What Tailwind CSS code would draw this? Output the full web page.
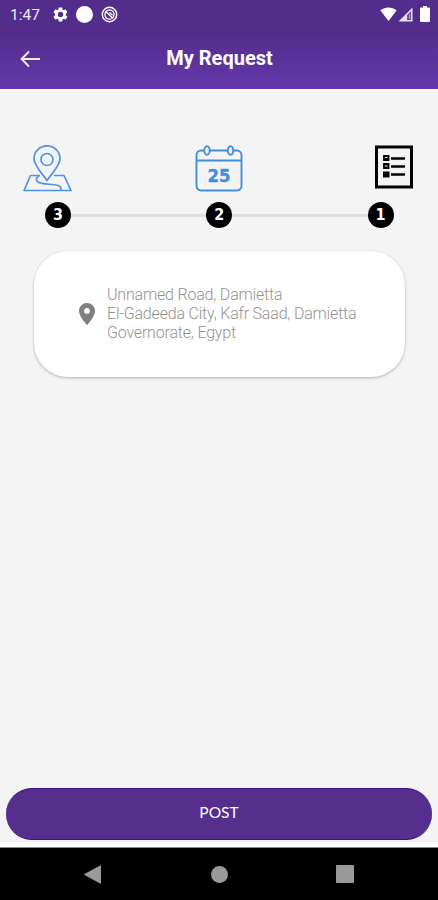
<!DOCTYPE html>
<html lang="en">
  <head>
    <meta charset="UTF-8" />
    <meta name="viewport" content="width=device-width, initial-scale=1.0" />
    <title>My Request</title>
    <script src="https://cdn.jsdelivr.net/npm/@tailwindcss/browser@4"></script>
  </head>
  <body class="h-screen flex flex-col overflow-hidden bg-[#f4f4f4] font-['Roboto',sans-serif]">
    <header class="h-[89px] shrink-0 bg-linear-to-b from-[#532d8c] from-35% to-[#6538ab] text-white">
      <!-- Status bar -->
      <div class="h-7 pl-[10px] pr-2 flex items-center">
        <span class="w-[43px] text-[15.5px] leading-7 text-white/90 pt-px">1:47</span>
        <svg class="size-[17px] -ml-[1px]" viewBox="0 0 24 24" fill="currentColor">
          <path fill-rule="evenodd" d="M19.4 13a7.5 7.5 0 0 0 0-2l2.1-1.7a.5.5 0 0 0 .1-.6l-2-3.5a.5.5 0 0 0-.6-.2l-2.5 1a7.3 7.3 0 0 0-1.7-1l-.4-2.6a.5.5 0 0 0-.5-.4h-4a.5.5 0 0 0-.5.4L9 5a7.3 7.3 0 0 0-1.7 1l-2.5-1a.5.5 0 0 0-.6.2l-2 3.5a.5.5 0 0 0 .1.6L4.5 11a7.5 7.5 0 0 0 0 2l-2.2 1.7a.5.5 0 0 0-.1.6l2 3.5c.1.2.4.3.6.2l2.5-1a7.3 7.3 0 0 0 1.7 1l.4 2.6c0 .2.2.4.5.4h4c.3 0 .5-.2.5-.4l.4-2.6a7.3 7.3 0 0 0 1.7-1l2.5 1c.2.1.5 0 .6-.2l2-3.5a.5.5 0 0 0-.1-.6zM12 15.8a3.8 3.8 0 1 1 0-7.6 3.8 3.8 0 0 1 0 7.6z" />
        </svg>
        <span class="size-[17px] ml-[7px] rounded-full bg-white"></span>
        <svg class="size-[17px] ml-2" viewBox="0 0 17 17" fill="none" stroke="currentColor">
          <circle cx="8.5" cy="8.5" r="7.2" stroke-width="1.4" />
          <path d="M4.3 10.5A4.7 4.7 0 0 1 8.5 3.8a4.7 4.7 0 0 1 4.2 6.7M4.3 10.5a4.7 4.7 0 0 0 8.4 0M4.8 5.5l6.7 6.5M8.5 6.5l3 2.800" stroke-width="1.3" />
        </svg>
        <svg class="w-[17px] h-[14px] ml-auto" viewBox="0 0 17 14" fill="currentColor">
          <path d="M8.5 14 .3 3.3C5-.6 12-.6 16.7 3.3z" />
        </svg>
        <svg class="w-[15px] h-[15px] ml-[1px]" viewBox="0 0 15 15">
          <path d="M14.5.5v14H.5z" fill="#fff" fill-opacity=".85" />
          <path d="M12.8 4.5v8.500H9.200V8z" fill="#532d8c" />
          <path d="M11.3 7v5.2" stroke="#fff" stroke-opacity=".7" />
        </svg>
        <svg class="w-[10px] h-[16px] ml-[7px]" viewBox="0 0 10 16" fill="currentColor">
          <path d="M3 0h4v1.500h2a1 1 0 0 1 1 1V15a1 1 0 0 1-1 1H1a1 1 0 0 1-1-1V2.500a1 1 0 0 1 1-1h2z" />
        </svg>
      </div>
      <!-- App bar -->
      <div class="h-[61px] px-5 grid grid-cols-[20px_1fr_20px] items-center">
        <svg class="w-5 h-[18px]" viewBox="0 0 20 18" fill="none" stroke="currentColor" stroke-opacity=".9" stroke-width="1.9">
          <path d="M20 9H2M9 1.500 1.600 9 9 16.500" />
        </svg>
        <h1 class="text-center text-[20px] leading-6 font-bold pl-px pb-[2px]">My Request</h1>
      </div>
    </header>

    <main class="flex-1 flex flex-col pt-14">
      <!-- Step icons -->
      <div class="flex justify-between items-start pl-[23px] pr-[25px]">
        <svg class="w-[49px] h-[48px]" viewBox="0 0 49 48" fill="none" stroke="#4e94e6" stroke-width="1.7" stroke-linejoin="round">
          <path d="M24 35.500C19 28 11 21 11 13.500a13 12.700 0 0 1 26 0C37 21 29 28 24 35.500z" />
          <circle cx="24" cy="14.5" r="6" />
          <path d="M17 30.500H7.500L1 45.500h47L41 30.500H31" />
          <path d="M16 31c-3 1.500-3.500 4-1 6 4.500 3.500 20 1 22.500 5 .6 1 .6 2 .2 3.500" />
        </svg>
        <svg class="w-[48px] h-[48px] -ml-[9px]" viewBox="0 0 48 48" fill="none" stroke="#4190da" stroke-width="1.9">
          <path d="M9 5.500H6A4.500 4.500 0 0 0 1.500 10v31A4.500 4.500 0 0 0 6 45.500h36a4.500 4.500 0 0 0 4.500-4.500V10A4.500 4.500 0 0 0 42 5.500h-3M15 5.500h18M1.500 15.500h45" />
          <ellipse cx="12" cy="5.5" rx="2.7" ry="4.3" />
          <ellipse cx="35.5" cy="5.5" rx="2.7" ry="4.3" />
          <text x="24" y="36.5" text-anchor="middle" textLength="23" lengthAdjust="spacingAndGlyphs" class="font-['DejaVu_Sans',sans-serif] text-[18.5px] font-bold" fill="#4190da" stroke="#4190da" stroke-width=".4">25</text>
        </svg>
        <svg class="w-[38px] h-[44px]" viewBox="0 0 38 44" fill="none" stroke="#000">
          <path d="M1.500 2h35v40h-35z" stroke-width="3" />
          <path d="M16 13.500h14M16 21.500h14M16 29.500h14" stroke-width="2.7" />
          <path d="M9 11h4.500v4H9zM9 19h4.500v4H9z" stroke-width="1.8" />
          <path d="M10 13.500h3M10 21h3" stroke-width="1.2" />
          <path d="M8 26.500h6.500v6H8z" fill="#000" stroke="none" />
        </svg>
      </div>
      <!-- Stepper -->
      <div class="mt-[9px] pl-[45px] pr-[44.5px] flex items-center font-['DejaVu_Sans_Condensed','DejaVu_Sans',sans-serif] font-bold text-[16px] text-white">
        <span class="size-[26px] rounded-full bg-black flex items-center justify-center leading-none">3</span>
        <span class="flex-1 h-[3px] bg-[#dfdfdf]"></span>
        <span class="size-[26px] rounded-full bg-black flex items-center justify-center leading-none">2</span>
        <span class="flex-1 h-[3px] bg-[#dfdfdf]"></span>
        <span class="size-[26px] rounded-full bg-black flex items-center justify-center leading-none">1</span>
      </div>
      <!-- Address card -->
      <section class="mt-[23px] ml-[34px] mr-[33px] h-[126px] rounded-[34px] bg-white shadow-[0_1px_3px_rgba(0,0,0,0.28)] flex items-center pl-[45px]">
        <svg class="w-4 h-[22px]" viewBox="0 0 16 22" fill="#808080">
          <path fill-rule="evenodd" d="M8 0a8 8 0 0 0-8 8c0 5.800 8 14 8 14s8-8.200 8-14a8 8 0 0 0-8-8zm0 10.700a2.800 2.800 0 1 1 0-5.600 2.800 2.800 0 0 1 0 5.600z" />
        </svg>
        <p class="ml-[12px] pt-px text-[16px] leading-[18.7px] font-light tracking-[-0.19px] text-[#929292] whitespace-nowrap">
          Unnamed Road, Damietta<br />
          El-Gadeeda City, Kafr Saad, Damietta<br />
          Governorate, Egypt
        </p>
      </section>

      <button class="mt-auto mx-[6px] h-[52px] rounded-full bg-[#552e8e] border-y border-[#3b0d82] text-white text-[15.5px] font-['Lato',sans-serif] pb-[3px]">POST</button>
      <div class="mt-[2px] h-[5px] bg-white"></div>
    </main>

    <!-- System navigation -->
    <nav class="h-[53px] shrink-0 bg-black border-t border-[#8a8a8a] flex justify-between items-center pl-[84px] pr-[84px]">
      <svg class="w-[17px] h-[19px]" viewBox="0 0 17 19" fill="#999"><path d="M16 .5a.7.7 0 0 1 1 .6v16.800a.7.7 0 0 1-1 .6L.5 10a.6.6 0 0 1 0-1z" /></svg>
      <span class="size-[17px] ml-px rounded-full bg-[#999]"></span>
      <span class="size-[18px] rounded-[1px] bg-[#999]"></span>
    </nav>
  </body>
</html>
